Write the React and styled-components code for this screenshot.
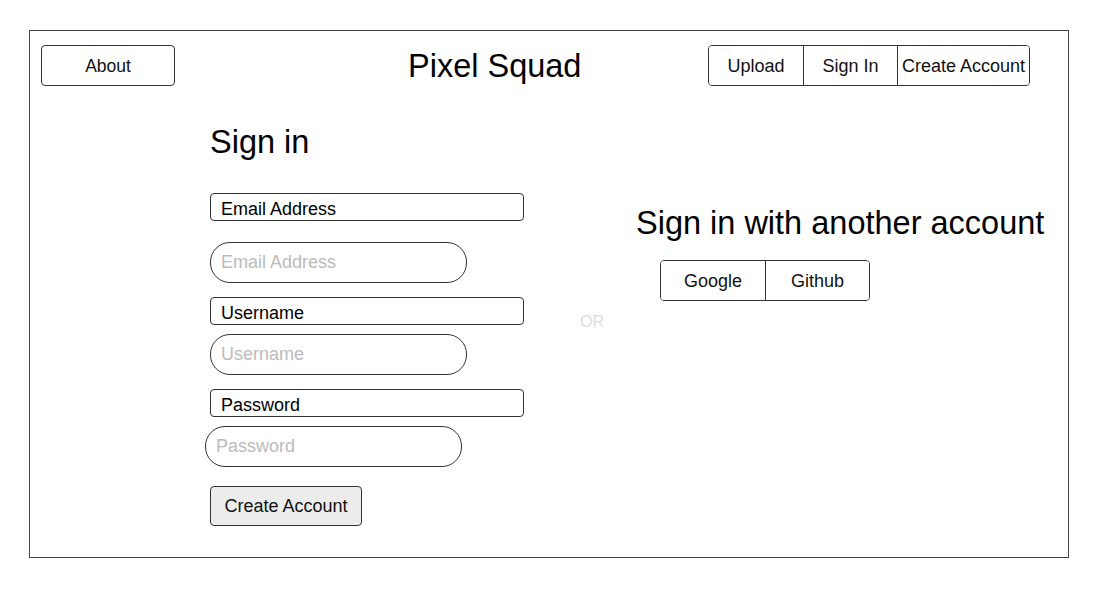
import React from "react";
import styled, { createGlobalStyle } from "styled-components";

const GlobalStyle = createGlobalStyle`
  body {
    margin: 0;
    background: #fff;
    font-family: "Liberation Sans", Arial, sans-serif;
    color: #000;
  }
`;

const Frame = styled.div`
  box-sizing: border-box;
  margin: 30px 0 0 29px;
  width: 1040px;
  height: 528px;
  border: 1px solid #444;
  display: flex;
  flex-direction: column;
`;

const Header = styled.header`
  display: flex;
  align-items: center;
  padding: 14px 38px 0 11px;
`;

const AboutButton = styled.button`
  box-sizing: border-box;
  width: 134px;
  height: 41px;
  border: 1px solid #333;
  border-radius: 4px;
  background: #fff;
  font-family: "Liberation Sans", Arial, sans-serif;
  font-size: 17.5px;
  color: #111;
  padding: 2px 0 0;
`;

const Title = styled.h1`
  margin: 0 0 0 233px;
  font-weight: normal;
  font-size: 32.5px;
  line-height: 40px;
`;

const Tabs = styled.nav`
  margin-left: auto;
  display: flex;
  border: 1px solid #333;
  border-radius: 4px;
  height: 41px;
  box-sizing: border-box;
  overflow: hidden;
`;

const Tab = styled.button`
  box-sizing: border-box;
  width: ${(p) => p.$w}px;
  height: 100%;
  border: none;
  border-left: ${(p) => (p.$first ? "none" : "1px solid #333")};
  background: #fff;
  font-family: "Liberation Sans", Arial, sans-serif;
  font-size: 18px;
  color: #111;
  padding: 2px 0 0;
`;

const Body = styled.main`
  display: flex;
  align-items: flex-start;
  padding-left: 180px;
`;

const FormColumn = styled.section`
  width: 313px;
  display: flex;
  flex-direction: column;
  align-items: flex-start;
  padding-top: 36px;
`;

const Heading = styled.h2`
  margin: 0;
  font-weight: normal;
  font-size: 32.5px;
  line-height: 40px;
`;

const Label = styled.label`
  box-sizing: border-box;
  display: block;
  width: 314px;
  height: 28px;
  margin-top: ${(p) => p.$gap}px;
  border: 1px solid #333;
  border-radius: 4px;
  padding: 5px 0 0 10px;
  font-size: 18px;
  line-height: 20px;
`;

const PillInput = styled.input`
  box-sizing: border-box;
  width: 257px;
  height: 41px;
  margin: ${(p) => p.$gap}px 0 0 ${(p) => p.$shift || 0}px;
  border: 1px solid #333;
  border-radius: 20px;
  padding: 0 10px;
  font-family: "Liberation Sans", Arial, sans-serif;
  font-size: 18px;
  outline: none;

  &::placeholder {
    color: #bbb;
  }
`;

const SubmitButton = styled.button`
  box-sizing: border-box;
  margin-top: 19px;
  width: 152px;
  height: 40px;
  border: 1px solid #333;
  border-radius: 4px;
  background: #ececec;
  font-family: "Liberation Sans", Arial, sans-serif;
  font-size: 18px;
  color: #111;
  padding: 0;
`;

const Or = styled.div`
  margin: 227px 0 0 57px;
  font-size: 16px;
  color: #ddd;
`;

const OtherColumn = styled.section`
  margin: 117px 0 0 32px;
  display: flex;
  flex-direction: column;
  align-items: flex-start;
`;

const Providers = styled.div`
  display: flex;
  margin: 17px 0 0 24px;
  border: 1px solid #333;
  border-radius: 4px;
  height: 41px;
  box-sizing: border-box;
  overflow: hidden;
`;

export default function App() {
  return (
    <>
      <GlobalStyle />
      <Frame>
        <Header>
          <AboutButton>About</AboutButton>
          <Title>Pixel Squad</Title>
          <Tabs>
            <Tab $first $w={94}>Upload</Tab>
            <Tab $w={94}>Sign In</Tab>
            <Tab $w={132}>Create Account</Tab>
          </Tabs>
        </Header>
        <Body>
          <FormColumn>
            <Heading>Sign in</Heading>
            <Label $gap={31}>Email Address</Label>
            <PillInput $gap={21} placeholder="Email Address" />
            <Label $gap={14}>Username</Label>
            <PillInput $gap={9} placeholder="Username" />
            <Label $gap={14}>Password</Label>
            <PillInput $gap={9} $shift={-5} type="password" placeholder="Password" />
            <SubmitButton>Create Account</SubmitButton>
          </FormColumn>
          <Or>OR</Or>
          <OtherColumn>
            <Heading>Sign in with another account</Heading>
            <Providers>
              <Tab $first $w={104}>Google</Tab>
              <Tab $w={104}>Github</Tab>
            </Providers>
          </OtherColumn>
        </Body>
      </Frame>
    </>
  );
}
